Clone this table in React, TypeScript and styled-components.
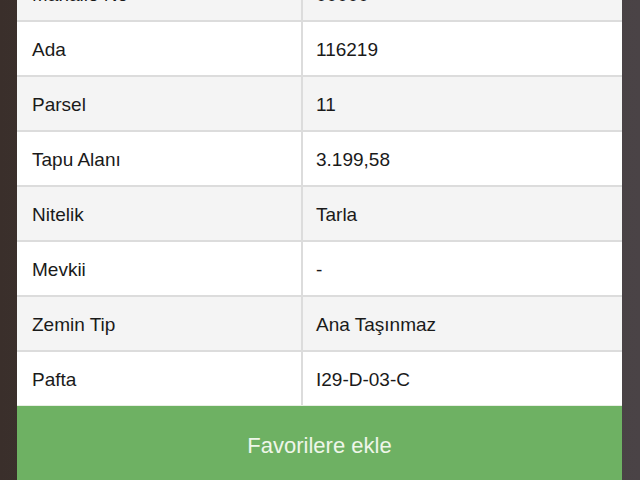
import styled, { createGlobalStyle } from "styled-components";

const GlobalStyle = createGlobalStyle`
  html, body {
    margin: 0;
    padding: 0;
    height: 100%;
    overflow: hidden;
  }
  body {
    background: linear-gradient(90deg, #3a2f2b 0%, #463c3b 50%, #4a4346 100%);
    font-family: "Liberation Sans", Arial, sans-serif;
  }
`;

const Screen = styled.div`
  height: 480px;
  overflow: hidden;
  display: flex;
  flex-direction: column;
  justify-content: flex-end;
  padding: 0 18px 0 17px;
`;

const Sheet = styled.div`
  display: flex;
  flex-direction: column;
  flex-shrink: 0;
`;

const Row = styled.div<{ $shaded: boolean }>`
  display: grid;
  grid-template-columns: 284px 1fr;
  height: 53px;
  border-top: 2px solid #dcdcdc;
  background: ${(p) => (p.$shaded ? "#f4f4f4" : "#ffffff")};
`;

const Label = styled.div`
  display: flex;
  align-items: center;
  padding: 2px 0 0 15px;
  font-size: 19px;
  color: #1a1a1a;
`;

const Value = styled.div`
  display: flex;
  align-items: center;
  padding: 2px 0 0 13px;
  border-left: 2px solid #dcdcdc;
  font-size: 19px;
  color: #1a1a1a;
`;

const FavButton = styled.button`
  height: 75px;
  border: none;
  border-top: 1px solid #e8efe4;
  background: #6eb163;
  color: #eef6e9;
  font-family: "Liberation Sans", Arial, sans-serif;
  font-size: 22px;
  padding: 5px 0 0;
  cursor: pointer;
`;

const rows: [string, string][] = [
  ["Mahalle No", "00000"],
  ["Ada", "116219"],
  ["Parsel", "11"],
  ["Tapu Alanı", "3.199,58"],
  ["Nitelik", "Tarla"],
  ["Mevkii", "-"],
  ["Zemin Tip", "Ana Taşınmaz"],
  ["Pafta", "I29-D-03-C"],
];

export default function App() {
  return (
    <>
      <GlobalStyle />
      <Screen>
        <Sheet>
          {rows.map(([label, value], i) => (
            <Row key={label} $shaded={i % 2 === 0}>
              <Label>{label}</Label>
              <Value>{value}</Value>
            </Row>
          ))}
          <FavButton>Favorilere ekle</FavButton>
        </Sheet>
      </Screen>
    </>
  );
}
